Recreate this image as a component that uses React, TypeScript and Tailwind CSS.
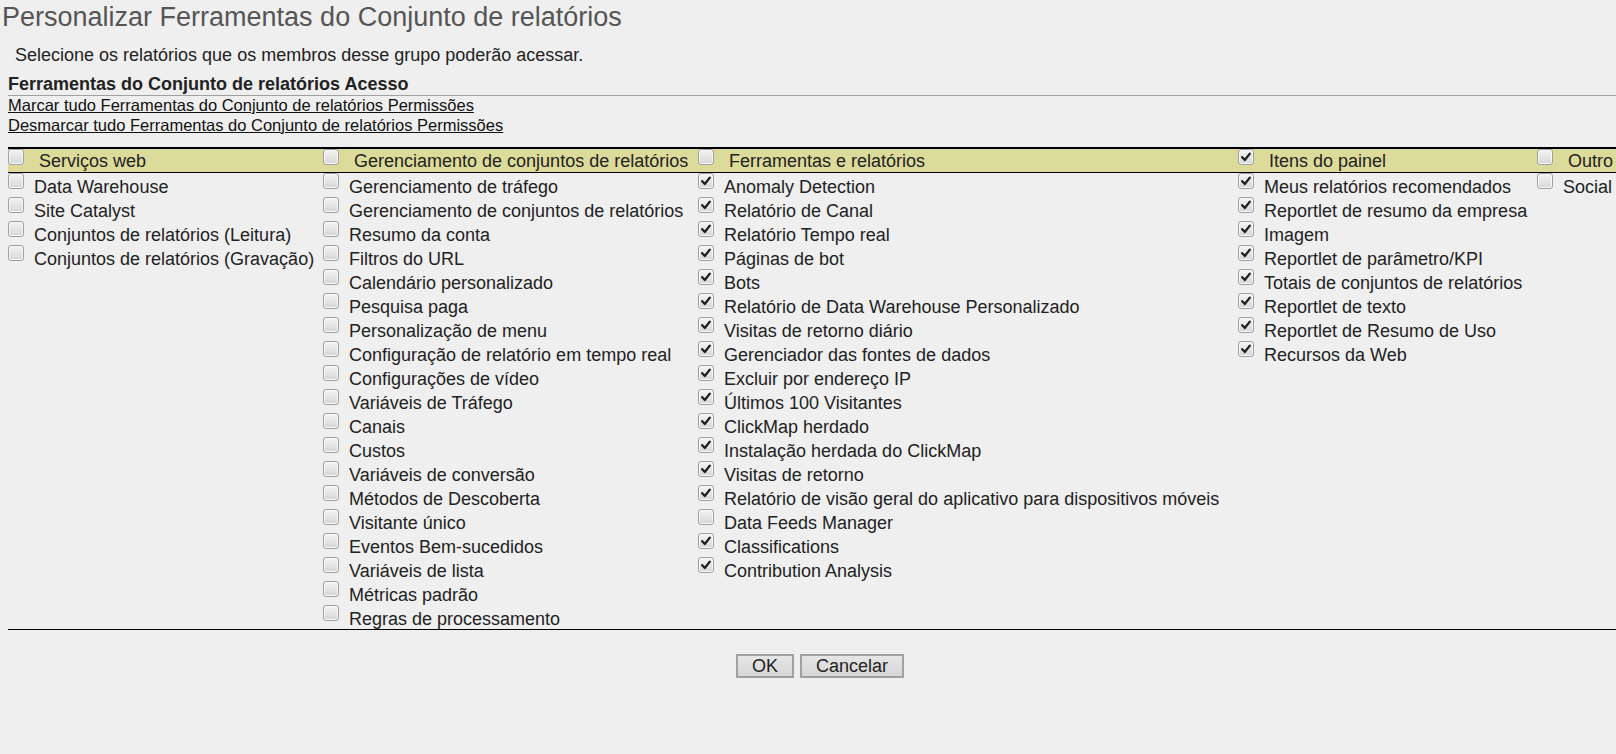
import React from 'react';

type Item = { label: string; checked: boolean };
type Group = { title: string; checked: boolean; items: Item[] };

const on = (label: string): Item => ({ label, checked: true });
const off = (label: string): Item => ({ label, checked: false });

const groups: Group[] = [
  {
    title: 'Serviços web',
    checked: false,
    items: [
      off('Data Warehouse'),
      off('Site Catalyst'),
      off('Conjuntos de relatórios (Leitura)'),
      off('Conjuntos de relatórios (Gravação)'),
    ],
  },
  {
    title: 'Gerenciamento de conjuntos de relatórios',
    checked: false,
    items: [
      off('Gerenciamento de tráfego'),
      off('Gerenciamento de conjuntos de relatórios'),
      off('Resumo da conta'),
      off('Filtros do URL'),
      off('Calendário personalizado'),
      off('Pesquisa paga'),
      off('Personalização de menu'),
      off('Configuração de relatório em tempo real'),
      off('Configurações de vídeo'),
      off('Variáveis de Tráfego'),
      off('Canais'),
      off('Custos'),
      off('Variáveis de conversão'),
      off('Métodos de Descoberta'),
      off('Visitante único'),
      off('Eventos Bem-sucedidos'),
      off('Variáveis de lista'),
      off('Métricas padrão'),
      off('Regras de processamento'),
    ],
  },
  {
    title: 'Ferramentas e relatórios',
    checked: false,
    items: [
      on('Anomaly Detection'),
      on('Relatório de Canal'),
      on('Relatório Tempo real'),
      on('Páginas de bot'),
      on('Bots'),
      on('Relatório de Data Warehouse Personalizado'),
      on('Visitas de retorno diário'),
      on('Gerenciador das fontes de dados'),
      on('Excluir por endereço IP'),
      on('Últimos 100 Visitantes'),
      on('ClickMap herdado'),
      on('Instalação herdada do ClickMap'),
      on('Visitas de retorno'),
      on('Relatório de visão geral do aplicativo para dispositivos móveis'),
      off('Data Feeds Manager'),
      on('Classifications'),
      on('Contribution Analysis'),
    ],
  },
  {
    title: 'Itens do painel',
    checked: true,
    items: [
      on('Meus relatórios recomendados'),
      on('Reportlet de resumo da empresa'),
      on('Imagem'),
      on('Reportlet de parâmetro/KPI'),
      on('Totais de conjuntos de relatórios'),
      on('Reportlet de texto'),
      on('Reportlet de Resumo de Uso'),
      on('Recursos da Web'),
    ],
  },
  {
    title: 'Outro',
    checked: false,
    items: [off('Social')],
  },
];

const Checkbox: React.FC<{ checked: boolean }> = ({ checked }) => (
  <span className="flex h-[16px] w-[16px] shrink-0 items-center justify-center rounded-[3px] border border-[#a0a0a0] bg-linear-to-b from-[#f4f4f4] to-[#d6d6d6] shadow-[inset_0_0_0_1px_#f8f8f8]">
    {checked && (
      <svg width="12" height="12" viewBox="0 0 12 12">
        <path d="M2.2 6.2 L4.8 9 L9.8 2.6" fill="none" stroke="#1f1f1f" strokeWidth="2.3" strokeLinecap="round" strokeLinejoin="round" />
      </svg>
    )}
  </span>
);

const cols = 'grid grid-cols-[315px_375px_540px_299px_1fr]';

export default function App() {
  return (
    <div className="min-h-screen w-full overflow-hidden bg-[#efefef] font-['Liberation_Sans',Arial,sans-serif] text-[#222]">
      <div className="w-[1640px] pt-[1px]">
        <h1 className="pl-[2px] text-[27px] leading-[33px] text-[#555]">
          Personalizar Ferramentas do Conjunto de relatórios
        </h1>
        <p className="mt-[11px] pl-[15px] text-[18px] leading-[20px]">
          Selecione os relatórios que os membros desse grupo poderão acessar.
        </p>
        <div className="mx-[8px]">
          <h2 className="mt-[9px] text-[18px] font-bold leading-[20px]">
            Ferramentas do Conjunto de relatórios Acesso
          </h2>
          <div className="mt-[1px] border-t border-[#a0a0a0]" />
          <div className="flex flex-col items-start text-[16.5px] leading-[19.5px]">
            <a href="#" className="text-[#111] underline">
              Marcar tudo Ferramentas do Conjunto de relatórios Permissões
            </a>
            <a href="#" className="text-[#111] underline">
              Desmarcar tudo Ferramentas do Conjunto de relatórios Permissões
            </a>
          </div>

          <div className="mt-[12px] text-[18px]">
            <div className={`${cols} border-t-2 border-b border-black bg-[#dcdb9a]`}>
              {groups.map(g => (
                <div key={g.title} className="flex h-[23px] items-start whitespace-nowrap">
                  <Checkbox checked={g.checked} />
                  <span className="ml-[15px] pt-[2px] leading-[20px]">{g.title}</span>
                </div>
              ))}
            </div>
            <div className={`${cols} border-b border-black`}>
              {groups.map(g => (
                <div key={g.title} className="flex flex-col">
                  {g.items.map(it => (
                    <div key={it.label} className="flex h-[24px] items-start whitespace-nowrap">
                      <Checkbox checked={it.checked} />
                      <span className="ml-[10px] pt-[4px] leading-[20px]">{it.label}</span>
                    </div>
                  ))}
                </div>
              ))}
            </div>
          </div>

          <div className="mt-[24px] flex justify-center gap-[6px]">
            <button className="h-[24px] w-[58px] border-2 border-[#a0a0a0] bg-linear-to-b from-[#e6e6e6] to-[#d6d6d6] text-[18px] leading-[20px] text-[#222]">
              OK
            </button>
            <button className="h-[24px] w-[104px] border-2 border-[#a0a0a0] bg-linear-to-b from-[#e6e6e6] to-[#d6d6d6] text-[18px] leading-[20px] text-[#222]">
              Cancelar
            </button>
          </div>
        </div>
      </div>
    </div>
  );
}
